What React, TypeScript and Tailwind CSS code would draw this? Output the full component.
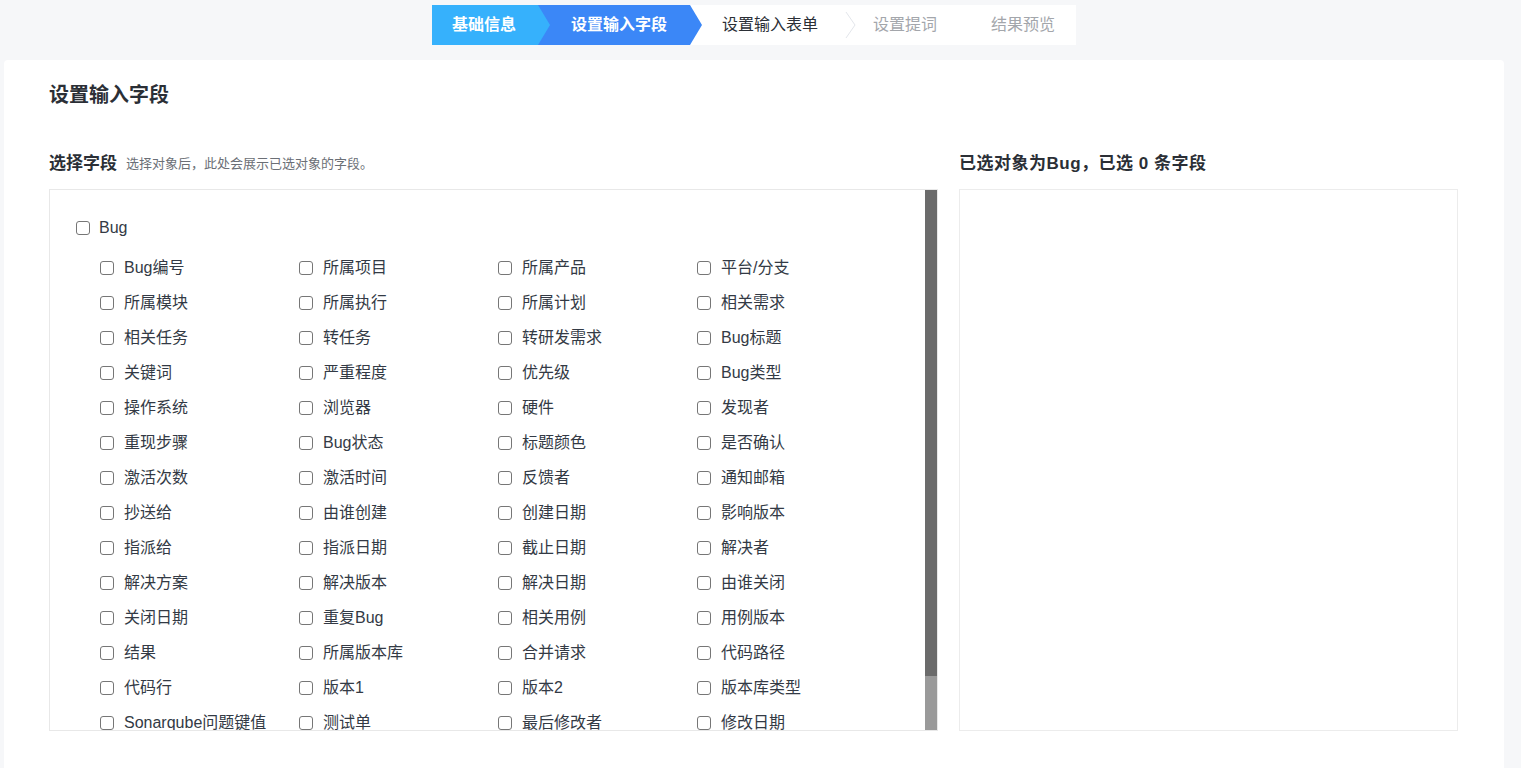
import React from 'react';

const fields: string[][] = [
  ['Bug编号', '所属项目', '所属产品', '平台/分支'],
  ['所属模块', '所属执行', '所属计划', '相关需求'],
  ['相关任务', '转任务', '转研发需求', 'Bug标题'],
  ['关键词', '严重程度', '优先级', 'Bug类型'],
  ['操作系统', '浏览器', '硬件', '发现者'],
  ['重现步骤', 'Bug状态', '标题颜色', '是否确认'],
  ['激活次数', '激活时间', '反馈者', '通知邮箱'],
  ['抄送给', '由谁创建', '创建日期', '影响版本'],
  ['指派给', '指派日期', '截止日期', '解决者'],
  ['解决方案', '解决版本', '解决日期', '由谁关闭'],
  ['关闭日期', '重复Bug', '相关用例', '用例版本'],
  ['结果', '所属版本库', '合并请求', '代码路径'],
  ['代码行', '版本1', '版本2', '版本库类型'],
  ['Sonarqube问题键值', '测试单', '最后修改者', '修改日期'],
];

function Box() {
  return <span className="block w-[14px] h-[14px] shrink-0 rounded-[3px] border border-[#767676] bg-white" />;
}

function Stepper() {
  return (
    <div className="flex h-[40px] w-[644px] ml-[432px] bg-white text-[16px] leading-[40px]">
      <div className="relative z-10 w-[118px] bg-[#36b1fc] pl-[20px] font-bold text-white [clip-path:polygon(0_0,106px_0,118px_50%,106px_100%,0_100%)]">
        基础信息
      </div>
      <div className="ml-[-12px] w-[164px] bg-[#3b87f7] pl-[33px] font-bold text-white [clip-path:polygon(0_0,152px_0,164px_50%,152px_100%,0_100%)]">
        设置输入字段
      </div>
      <div className="ml-[20px] text-[#2b2f36]">设置输入表单</div>
      <svg className="ml-[27px] mt-[6px]" width="11" height="28" viewBox="0 0 11 28">
        <polyline points="1,1 10,14 1,27" fill="none" stroke="#e3e6eb" strokeWidth="1" />
      </svg>
      <div className="ml-[17px] text-[#a3a6ab]">设置提词</div>
      <div className="ml-[54px] text-[#a3a6ab]">结果预览</div>
    </div>
  );
}

export default function App() {
  return (
    <div className="min-h-screen bg-[#f6f7f9] pt-[5px] font-['Liberation_Sans','Noto_Sans_CJK_SC',sans-serif]">
      <Stepper />
      <div className="mt-[15px] ml-[4px] mr-[17px] rounded-[4px] bg-white px-[45px] pt-[21px] pb-[60px]">
        <h1 className="text-[20px] leading-[28px] font-bold text-[#2b2f36]">设置输入字段</h1>
        <div className="mt-[43px] flex gap-[21px]">
          <div className="w-[889px]">
            <div className="flex items-center h-[24px]">
              <span className="text-[17px] font-bold text-[#2b2f36]">选择字段</span>
              <span className="ml-[9px] text-[13px] text-[#6b6f76]">选择对象后，此处会展示已选对象的字段。</span>
            </div>
            <div className="mt-[13px] flex h-[542px] border border-[#e8e8e8] overflow-hidden">
              <div className="flex-1 overflow-hidden">
                <div className="mt-[20px] ml-[26px] flex h-[35px] items-center gap-[9px] text-[16px] text-[#333a45]">
                  <Box />
                  <span>Bug</span>
                </div>
                <div className="mt-[5px] ml-[50px] grid grid-cols-[199px_199px_199px_199px]">
                  {fields.flat().map((f, i) => (
                    <div key={i} className="flex h-[35px] items-center gap-[10px] text-[16px] text-[#333a45] whitespace-nowrap">
                      <Box />
                      <span>{f}</span>
                    </div>
                  ))}
                </div>
              </div>
              <div className="flex w-[12px] flex-col">
                <div className="h-[486px] bg-[#6b6b6b]" />
                <div className="flex-1 bg-[#9a9a9a]" />
              </div>
            </div>
          </div>
          <div className="w-[499px]">
            <div className="flex items-center h-[24px] text-[17px] font-bold text-[#2b2f36] tracking-[0.5px]">
              已选对象为Bug，已选 0 条字段
            </div>
            <div className="mt-[13px] h-[542px] border border-[#ececec]" />
          </div>
        </div>
      </div>
    </div>
  );
}
